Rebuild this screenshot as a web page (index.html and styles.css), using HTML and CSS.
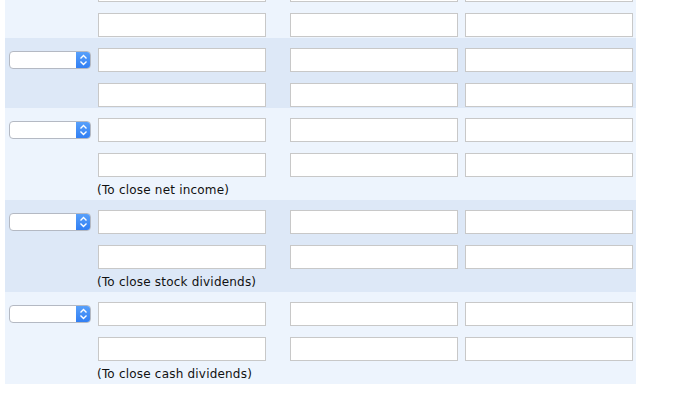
FILE: index.html
```html
<!DOCTYPE html>
<html lang="en">
<head>
    <meta charset="UTF-8">
    <meta name="viewport" content="width=device-width, initial-scale=1.0">
    <title>Closing Entries</title>
    <link rel="stylesheet" href="styles.css">
</head>
<body>
    <div class="sheet">
        <!-- entry 1 (scrolled, top row cut off) -->
        <div class="band band-light">
            <div class="row">
                <div class="acct"></div>
                <input class="title" type="text">
                <input class="debit" type="text">
                <input class="credit" type="text">
            </div>
            <div class="row">
                <div class="acct"></div>
                <input class="title" type="text">
                <input class="debit" type="text">
                <input class="credit" type="text">
            </div>
        </div>

        <!-- entry 2 -->
        <div class="band band-dark">
            <div class="row">
                <div class="acct">
                    <div class="pick">
                        <select><option></option></select>
                        <span class="pick-btn"><svg width="9" height="12" viewBox="0 0 9 12"><path d="M1.5 4.5 L4.5 1.5 L7.5 4.5 M1.5 7.5 L4.5 10.5 L7.5 7.5" fill="none" stroke="#fff" stroke-width="1.4"/></svg></span>
                    </div>
                </div>
                <input class="title" type="text">
                <input class="debit" type="text">
                <input class="credit" type="text">
            </div>
            <div class="row">
                <div class="acct"></div>
                <input class="title" type="text">
                <input class="debit" type="text">
                <input class="credit" type="text">
            </div>
        </div>

        <!-- entry 3 -->
        <div class="band band-light">
            <div class="row">
                <div class="acct">
                    <div class="pick">
                        <select><option></option></select>
                        <span class="pick-btn"><svg width="9" height="12" viewBox="0 0 9 12"><path d="M1.5 4.5 L4.5 1.5 L7.5 4.5 M1.5 7.5 L4.5 10.5 L7.5 7.5" fill="none" stroke="#fff" stroke-width="1.4"/></svg></span>
                    </div>
                </div>
                <input class="title" type="text">
                <input class="debit" type="text">
                <input class="credit" type="text">
            </div>
            <div class="row">
                <div class="acct"></div>
                <input class="title" type="text">
                <input class="debit" type="text">
                <input class="credit" type="text">
            </div>
            <p class="note">(To close net income)</p>
        </div>

        <!-- entry 4 -->
        <div class="band band-dark">
            <div class="row">
                <div class="acct">
                    <div class="pick">
                        <select><option></option></select>
                        <span class="pick-btn"><svg width="9" height="12" viewBox="0 0 9 12"><path d="M1.5 4.5 L4.5 1.5 L7.5 4.5 M1.5 7.5 L4.5 10.5 L7.5 7.5" fill="none" stroke="#fff" stroke-width="1.4"/></svg></span>
                    </div>
                </div>
                <input class="title" type="text">
                <input class="debit" type="text">
                <input class="credit" type="text">
            </div>
            <div class="row">
                <div class="acct"></div>
                <input class="title" type="text">
                <input class="debit" type="text">
                <input class="credit" type="text">
            </div>
            <p class="note">(To close stock dividends)</p>
        </div>

        <!-- entry 5 -->
        <div class="band band-light">
            <div class="row">
                <div class="acct">
                    <div class="pick">
                        <select><option></option></select>
                        <span class="pick-btn"><svg width="9" height="12" viewBox="0 0 9 12"><path d="M1.5 4.5 L4.5 1.5 L7.5 4.5 M1.5 7.5 L4.5 10.5 L7.5 7.5" fill="none" stroke="#fff" stroke-width="1.4"/></svg></span>
                    </div>
                </div>
                <input class="title" type="text">
                <input class="debit" type="text">
                <input class="credit" type="text">
            </div>
            <div class="row">
                <div class="acct"></div>
                <input class="title" type="text">
                <input class="debit" type="text">
                <input class="credit" type="text">
            </div>
            <p class="note">(To close cash dividends)</p>
        </div>
    </div>
</body>
</html>
```

FILE: styles.css
```css
body {
    margin: 0;
    background-color: #fff;
    font-family: "DejaVu Sans", Verdana, sans-serif;
    font-size: 12px;
    color: #111;
}

.sheet {
    width: 631px;
    margin: -32px 0 0 5px;
}

.band-light {
    background-color: #edf4fd;
}

.band-dark {
    background-color: #dde8f7;
}

.row {
    display: flex;
    align-items: center;
    padding-top: 10px;
    padding-bottom: 1px;
}

.acct {
    width: 82px;
    margin-left: 4px;
    margin-right: 7px;
}

input {
    box-sizing: border-box;
    width: 168px;
    height: 24px;
    margin: 0;
    padding: 2px 4px;
    border: 1px solid #c8c8c8;
    background-color: #fff;
    font-family: "DejaVu Sans", Verdana, sans-serif;
    font-size: 12px;
}

.debit {
    margin-left: 24px;
}

.credit {
    margin-left: 7px;
}

.pick {
    display: flex;
    box-sizing: border-box;
    width: 82px;
    height: 18px;
    border: 1px solid #b4b9c3;
    border-radius: 4px;
    background-color: #fff;
    overflow: hidden;
}

.pick select {
    flex: 1;
    min-width: 0;
    border: none;
    background: transparent;
    appearance: none;
    -webkit-appearance: none;
    outline: none;
}

.pick-btn {
    display: flex;
    align-items: center;
    justify-content: center;
    width: 15px;
    margin: -1px -1px -1px 0;
    background: linear-gradient(#5aa2fb, #2f7df3);
    border-radius: 0 4px 4px 0;
}

.note {
    margin: 0;
    padding: 5px 0 2px 92px;
    line-height: 15px;
    letter-spacing: 0.2px;
}
```
